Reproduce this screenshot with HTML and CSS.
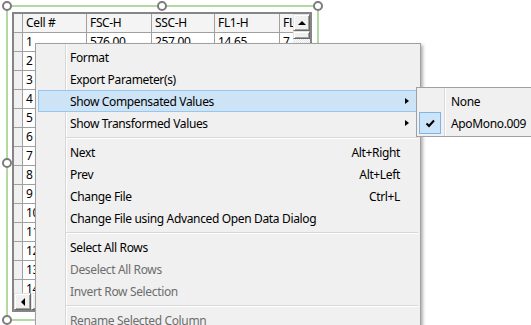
FILE: index.html
```html
<!DOCTYPE html>
<html>
<head>
<meta charset="utf-8">
<link rel="stylesheet" href="styles.css">
</head>
<body>
<div class="stage">
  <div class="selframe"></div>
  <div class="grid-window">
    <div class="grid-top">
      <div class="grid-body">
        <div class="row head">
          <div class="c rh"></div><div class="c">Cell #</div><div class="c">FSC-H</div><div class="c">SSC-H</div><div class="c">FL1-H</div><div class="c last">FL2-H</div>
        </div>
        <div class="row"><div class="c rh"></div><div class="c">1</div><div class="c">576.00</div><div class="c">257.00</div><div class="c">14.65</div><div class="c last">7.42</div></div>
        <div class="row"><div class="c rh"></div><div class="c">2</div><div class="c"></div><div class="c"></div><div class="c"></div><div class="c last"></div></div>
        <div class="row"><div class="c rh"></div><div class="c">3</div><div class="c"></div><div class="c"></div><div class="c"></div><div class="c last"></div></div>
        <div class="row"><div class="c rh"></div><div class="c">4</div><div class="c"></div><div class="c"></div><div class="c"></div><div class="c last"></div></div>
        <div class="row"><div class="c rh"></div><div class="c">5</div><div class="c"></div><div class="c"></div><div class="c"></div><div class="c last"></div></div>
        <div class="row"><div class="c rh"></div><div class="c">6</div><div class="c"></div><div class="c"></div><div class="c"></div><div class="c last"></div></div>
        <div class="row"><div class="c rh"></div><div class="c">7</div><div class="c"></div><div class="c"></div><div class="c"></div><div class="c last"></div></div>
        <div class="row"><div class="c rh"></div><div class="c">8</div><div class="c"></div><div class="c"></div><div class="c"></div><div class="c last"></div></div>
        <div class="row"><div class="c rh"></div><div class="c">9</div><div class="c"></div><div class="c"></div><div class="c"></div><div class="c last"></div></div>
        <div class="row"><div class="c rh"></div><div class="c">10</div><div class="c"></div><div class="c"></div><div class="c"></div><div class="c last"></div></div>
        <div class="row"><div class="c rh"></div><div class="c">11</div><div class="c"></div><div class="c"></div><div class="c"></div><div class="c last"></div></div>
        <div class="row"><div class="c rh"></div><div class="c">12</div><div class="c"></div><div class="c"></div><div class="c"></div><div class="c last"></div></div>
        <div class="row"><div class="c rh"></div><div class="c">13</div><div class="c"></div><div class="c"></div><div class="c"></div><div class="c last"></div></div>
        <div class="row"><div class="c rh"></div><div class="c">14</div><div class="c"></div><div class="c"></div><div class="c"></div><div class="c last"></div></div>
        <div class="row"><div class="c rh"></div><div class="c">15</div><div class="c"></div><div class="c"></div><div class="c"></div><div class="c last"></div></div>
      </div>
      <div class="vscroll">
        <div class="sbtn"><span class="tri-up"></span></div>
        <div class="vthumb"></div>
        <div class="track"></div>
      </div>
    </div>
    <div class="hscroll">
      <div class="sbtn"><span class="tri-left"></span></div>
      <div class="hthumb"></div>
      <div class="track"></div>
      <div class="corner"></div>
    </div>
  </div>

  <div class="handle h-tl"></div>
  <div class="handle h-tm"></div>
  <div class="handle h-tr"></div>
  <div class="handle h-ml"></div>
  <div class="handle h-bl"></div>

  <div class="menu">
    <div class="mi"><span class="lbl">Format</span></div>
    <div class="mi"><span class="lbl">Export Parameter(s)</span></div>
    <div class="mi hot"><span class="lbl">Show Compensated Values</span><span class="arrow"></span></div>
    <div class="mi"><span class="lbl">Show Transformed Values</span><span class="arrow"></span></div>
    <div class="sep"></div>
    <div class="mi"><span class="lbl">Next</span><span class="sc">Alt+Right</span></div>
    <div class="mi"><span class="lbl">Prev</span><span class="sc">Alt+Left</span></div>
    <div class="mi"><span class="lbl">Change File</span><span class="sc">Ctrl+L</span></div>
    <div class="mi"><span class="lbl">Change File using Advanced Open Data Dialog</span></div>
    <div class="sep"></div>
    <div class="mi"><span class="lbl">Select All Rows</span></div>
    <div class="mi dis"><span class="lbl">Deselect All Rows</span></div>
    <div class="mi dis"><span class="lbl">Invert Row Selection</span></div>
    <div class="sep"></div>
    <div class="mi dis"><span class="lbl">Rename Selected Column</span></div>
  </div>

  <div class="submenu">
    <div class="mi"><span class="lbl">None</span></div>
    <div class="mi"><span class="check"><svg width="22" height="22" viewBox="0 0 22 22"><path d="M7.5 11.5 L10 14 L15 8.5" fill="none" stroke="#000" stroke-width="2"/></svg></span><span class="lbl">ApoMono.009</span></div>
  </div>
</div>
</body>
</html>
```

FILE: styles.css
```css
html, body {
  margin: 0;
  padding: 0;
  background: #fff;
}
body {
  font-family: "Noto Sans", "Liberation Sans", sans-serif;
  font-size: 12px;
  letter-spacing: -0.35px;
  color: #000;
}
.stage {
  position: relative;
  width: 531px;
  height: 325px;
  overflow: hidden;
}
.selframe {
  position: absolute;
  left: 6px;
  top: 5px;
  width: 313px;
  height: 316px;
  border: 2px solid #b3d9a2;
  box-sizing: border-box;
}
.handle {
  position: absolute;
  width: 10px;
  height: 10px;
  box-sizing: border-box;
  border: 2px solid #7c7c7c;
  border-radius: 50%;
  background: #fff;
}
.h-tl { left: 2px; top: 1px; }
.h-tm { left: 157px; top: 1px; }
.h-tr { left: 313px; top: 1px; }
.h-ml { left: 2px; top: 158px; }
.h-bl { left: 2px; top: 315px; }

.grid-window {
  position: absolute;
  left: 12px;
  top: 12px;
  width: 300px;
  height: 300px;
  box-sizing: border-box;
  border: 2px solid #858585;
  background: #fff;
  display: flex;
  flex-direction: column;
}
.grid-top {
  flex: 1;
  display: flex;
  min-height: 0;
}
.grid-body {
  flex: 1;
  overflow: hidden;
}
.row {
  display: grid;
  grid-template-columns: 9px 64px 65px 63px 65px 80px;
  height: 19px;
}
.c {
  box-sizing: border-box;
  border-right: 1px solid #a0a0a0;
  border-bottom: 1px solid #a0a0a0;
  padding-left: 3px;
  line-height: 18px;
  white-space: nowrap;
  overflow: hidden;
}
.c.rh {
  background: #f0f0f0;
  padding: 0;
}
.c.last { border-right: 0; }
.row.head .c {
  background: #f4f4f4;
}
.vscroll {
  width: 17px;
  display: flex;
  flex-direction: column;
}
.sbtn {
  width: 17px;
  height: 17px;
  box-sizing: border-box;
  background: #f0f0f0;
  border: 1px solid;
  border-color: #e3e3e3 #696969 #696969 #e3e3e3;
  box-shadow: inset 1px 1px 0 #fff, inset -1px -1px 0 #a0a0a0;
  display: flex;
  align-items: center;
  justify-content: center;
  flex: none;
}
.vthumb {
  height: 8px;
  box-sizing: border-box;
  background: #f0f0f0;
  border: 1px solid;
  border-color: #e3e3e3 #696969 #696969 #e3e3e3;
  box-shadow: inset 1px 1px 0 #fff, inset -1px -1px 0 #a0a0a0;
  flex: none;
}
.hthumb {
  width: 8px;
  box-sizing: border-box;
  background: #f0f0f0;
  border: 1px solid;
  border-color: #e3e3e3 #696969 #696969 #e3e3e3;
  box-shadow: inset 1px 1px 0 #fff, inset -1px -1px 0 #a0a0a0;
  flex: none;
}
.track {
  flex: 1;
  background: repeating-conic-gradient(#fff 0 25%, #e3e3e3 0 50%) 0 0 / 2px 2px;
}
.tri-up {
  width: 0;
  height: 0;
  border-left: 4px solid transparent;
  border-right: 4px solid transparent;
  border-bottom: 4px solid #000;
}
.tri-left {
  width: 0;
  height: 0;
  border-top: 4px solid transparent;
  border-bottom: 4px solid transparent;
  border-right: 4px solid #000;
}
.hscroll {
  height: 17px;
  display: flex;
  flex: none;
}
.corner {
  width: 17px;
  background: #f0f0f0;
}

.menu {
  position: absolute;
  left: 35px;
  top: 43px;
  width: 386px;
  height: 300px;
  box-sizing: border-box;
  border: 1px solid #a0a0a0;
  padding: 2px;
  background: linear-gradient(to right, transparent 29px, #d7d7d7 29px, #d7d7d7 30px, #fff 30px, #fff 31px, transparent 31px), #f0f0f0;
  box-shadow: 2px 2px 3px rgba(0,0,0,0.3);
}
.mi {
  height: 22px;
  box-sizing: border-box;
  display: flex;
  align-items: center;
  padding-left: 32px;
  padding-right: 18px;
  position: relative;
  white-space: nowrap;
  border: 1px solid transparent;
}
.mi .lbl {
  flex: 1;
  margin-left: -1px;
}
.mi .sc {
  margin-right: -1px;
}
.mi.hot {
  background: #cde4f7;
  border-color: #99c6ec;
}
.mi.dis { color: #6d6d6d; }
.arrow {
  position: absolute;
  right: 8px;
  top: 7px;
  width: 0;
  height: 0;
  border-top: 3.5px solid transparent;
  border-bottom: 3.5px solid transparent;
  border-left: 4px solid #000;
}
.sep {
  height: 7px;
  box-sizing: border-box;
  margin-left: 28px;
  padding-top: 3px;
}
.sep::before {
  content: "";
  display: block;
  border-top: 1px solid #d7d7d7;
  border-bottom: 1px solid #fff;
}
.submenu {
  position: absolute;
  left: 416px;
  top: 87px;
  width: 160px;
  box-sizing: border-box;
  border: 1px solid #a0a0a0;
  padding: 2px;
  background: linear-gradient(to right, transparent 27px, #d7d7d7 27px, #d7d7d7 28px, #fff 28px, #fff 29px, transparent 29px), #f0f0f0;
}
.check {
  position: absolute;
  left: -1px;
  top: -1px;
  width: 22px;
  height: 22px;
  box-sizing: border-box;
  background: #cce4f7;
  border: 1px solid #7eb4ea;
}
.check svg {
  position: absolute;
  left: -1px;
  top: -1px;
}
```
